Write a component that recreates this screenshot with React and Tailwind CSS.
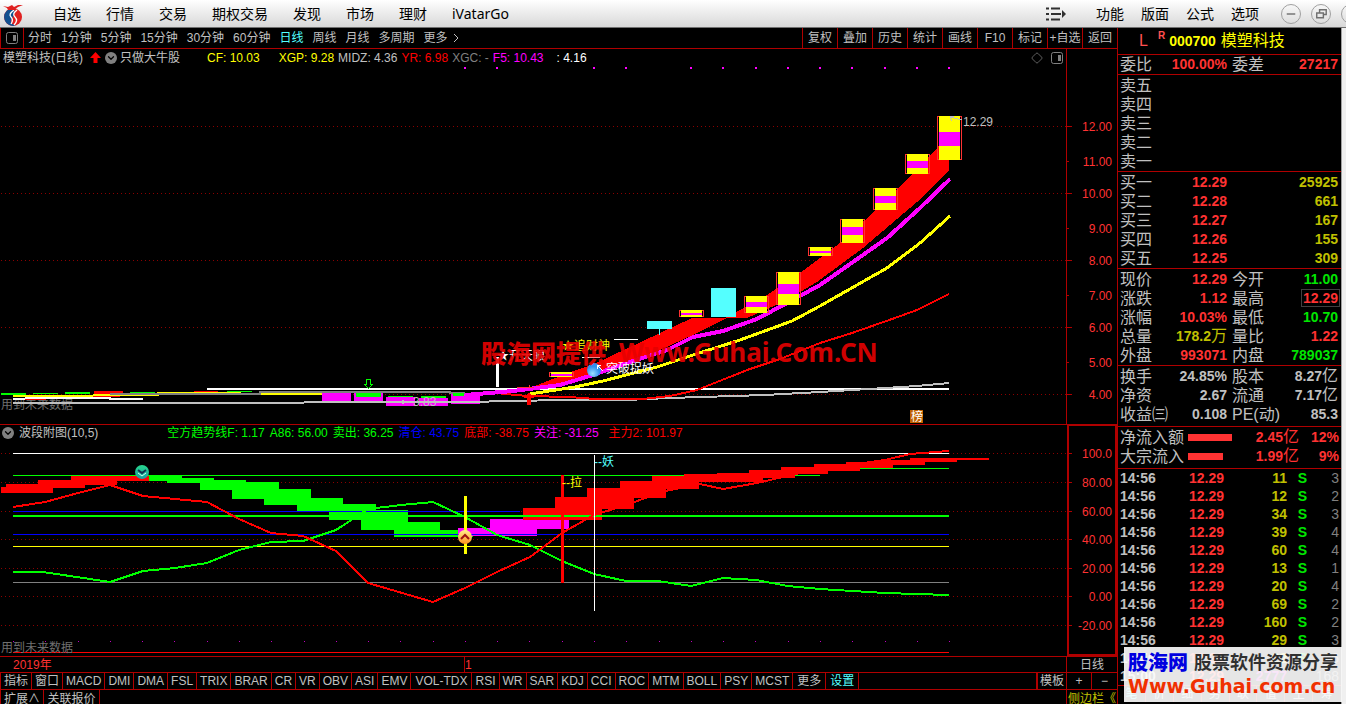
import { ChevronDown, Diamond } from 'lucide-react';

const MENU = ['自选', '行情', '交易', '期权交易', '发现', '市场', '理财', 'iVatarGo'];
const MENU_RIGHT = ['功能', '版面', '公式', '选项'];
const PERIODS = ['分时', '1分钟', '5分钟', '15分钟', '30分钟', '60分钟', '日线', '周线', '月线', '多周期', '更多'];
const TOOLS = ['复权', '叠加', '历史', '统计', '画线', 'F10', '标记', '+自选', '返回'];
const INDICATORS = ['指标', '窗口', 'MACD', 'DMI', 'DMA', 'FSL', 'TRIX', 'BRAR', 'CR', 'VR', 'OBV', 'ASI', 'EMV', 'VOL-TDX', 'RSI', 'WR', 'SAR', 'KDJ', 'CCI', 'ROC', 'MTM', 'BOLL', 'PSY', 'MCST', '更多', '设置'];

const SELLS = ['卖五', '卖四', '卖三', '卖二', '卖一'];
const BUYS = [
  ['买一', '12.29', '25925'],
  ['买二', '12.28', '661'],
  ['买三', '12.27', '167'],
  ['买四', '12.26', '155'],
  ['买五', '12.25', '309'],
];

const RED = 'text-[#ff3232]';
const GREEN = 'text-[#00e600]';
const GOLD = 'text-[#c0c000]';
const GREY = 'text-[#c0c0c0]';

// [label, value, colour, label, value, colour]
const QUOTE = [
  ['现价', '12.29', RED, '今开', '11.00', GREEN],
  ['涨跌', '1.12', RED, '最高', '12.29', RED],
  ['涨幅', '10.03%', RED, '最低', '10.70', GREEN],
  ['总量', '178.2万', GOLD, '量比', '1.22', RED],
  ['外盘', '993071', RED, '内盘', '789037', GREEN],
];
const BASICS = [
  ['换手', '24.85%', GREY, '股本', '8.27亿', GREY],
  ['净资', '2.67', GREY, '流通', '7.17亿', GREY],
  ['收益㈢', '0.108', GREY, 'PE(动)', '85.3', GREY],
];

const TICKS = [
  ['14:56', '11', '3'],
  ['14:56', '12', '2'],
  ['14:56', '34', '3'],
  ['14:56', '39', '4'],
  ['14:56', '60', '4'],
  ['14:56', '13', '1'],
  ['14:56', '20', '4'],
  ['14:56', '69', '2'],
  ['14:56', '160', '2'],
  ['14:56', '29', '3'],
  ['14:56', '22', '6'],
  ['15:00', '2777', '168'],
];

// limit-up candles: x, top, bottom, band top, band bottom
const CANDLES = [
  [551, 372, 377, 374, 376],
  [681, 310, 317, 313, 315],
  [746, 296, 313, 302, 307],
  [778, 272, 305, 284, 294],
  [810, 247, 256, 251, 253],
  [842, 219, 243, 227, 235],
  [875, 188, 210, 196, 203],
  [907, 154, 174, 161, 168],
  [939, 116, 160, 132, 146],
];
const SIGNAL_DOTS = [465, 497, 594, 626, 691, 723, 756, 788, 820, 852, 885, 917, 949];

const PRICE_AXIS = [['12.00', 126], ['11.00', 161], ['10.00', 193], ['9.00', 228], ['8.00', 260], ['7.00', 295], ['6.00', 327], ['5.00', 362], ['4.00', 394]];
const WAVE_AXIS = [['100.0', 453], ['80.00', 482], ['60.00', 511], ['40.00', 539], ['20.00', 568], ['0.00', 596], ['-20.00', 625]];

function Axis({ labels, every }) {
  return (
    <g>
      {labels.map(([label, y], i) => (
        <g key={label}>
          {i % every === 0 && <path d={`M1 ${y + 0.5}H1066`} stroke="#8c0000" strokeDasharray="1 3" />}
          <path d={`M1067 ${y + 0.5}h${i % every === 0 ? 5 : 2}`} stroke="#b00000" />
          <text x="1112" y={y + 5} textAnchor="end" fill="#ff3232" fontSize="12">{label}</text>
        </g>
      ))}
    </g>
  );
}

function PriceChart() {
  return (
    <svg viewBox="0 66 1117 358" className="block h-auto w-full" shapeRendering="crispEdges">
      <defs>
        <radialGradient id="blueBall" cx="40%" cy="75%">
          <stop offset="0" stopColor="#9be0ff" />
          <stop offset="1" stopColor="#3090f0" />
        </radialGradient>
      </defs>
      <Axis labels={PRICE_AXIS} every={2} />
      <path d="M1066.5 66V424" stroke="#b00000" />
      {SIGNAL_DOTS.map((x) => <rect key={x} x={x - 1} y="67" width="2" height="2" fill="#ff00ff" />)}

      <text x="1" y="409" fontSize="12" fill="#707070">用到未来数据</text>

      {/* flat stretch before the breakout */}
      <g fill="#00ff00">
        <rect x="1" y="393" width="25" height="2" />
        <rect x="33" y="393" width="25" height="1" />
        <rect x="65" y="392" width="25" height="2" />
        <rect x="130" y="392" width="25" height="1" />
        <rect x="227" y="391" width="25" height="1" />
        <rect x="323" y="391" width="25" height="2" />
      </g>
      <g fill="#ff0000">
        <rect x="60" y="395" width="60" height="2" />
        <rect x="94" y="391" width="29" height="4" />
        <rect x="194" y="391" width="24" height="1" />
        <rect x="291" y="391" width="26" height="1" />
        <rect x="13" y="399" width="33" height="1" />
      </g>
      <path d="M13 396H77L110 395H158V393H240V394H337V393" fill="none" stroke="#ffff00" strokeWidth="2" />
      <path d="M110 394H260V392H450V393H465" fill="none" stroke="#808080" strokeWidth="2" />
      <path d="M13 399L37 398H110V399H143" fill="none" stroke="#fff" strokeWidth="2" />
      <g fill="#ff00ff">
        <rect x="322" y="393" width="29" height="8" />
        <rect x="354" y="393" width="29" height="8" />
        <rect x="386" y="397" width="29" height="9" />
        <rect x="419" y="398" width="29" height="8" />
        <rect x="451" y="394" width="29" height="10" />
      </g>
      <g fill="#00ff00">
        <rect x="356" y="393" width="25" height="4" />
        <rect x="388" y="396" width="25" height="1" />
        <rect x="421" y="396" width="25" height="2" />
        <rect x="453" y="393" width="11" height="3" />
      </g>
      <path d="M207 389H949" stroke="#fff" strokeWidth="2" />
      <path d="M13 403H303L305 402H465L562 400H627L668 398L702 397L765 395L820 392L885 388L917 386L949 383" fill="none" stroke="#c0c0c0" strokeWidth="2" />
      <path d="M401 402H411M401 402l3 -2M401 402l3 2" stroke="#c0c0c0" fill="none" />
      <text x="413" y="406" fontSize="12" fill="#c0c0c0">3.83</text>
      <path d="M366.500 379.500h4v5h2l-4 4l-4 -4h2z" fill="none" stroke="#00ff00" />

      {/* moving averages and the ribbon */}
      <path d="M530 388L573 371L594 364L643 341L692 318H725L740 310L767 295L800 273L840 243L865 220L897 190L928 158L937 148L949 135V171L917 202L863 248L817 282L787 300L747 318H727L693 335L660 350L594 377L560 385L530 389Z" fill="#ff0000" />
      <path d="M485 392L527 396L570 397L595 399H642L670 396L697 390L727 378L750 369L780 359L820 343L852 333L892 319L917 310L949 294" fill="none" stroke="#ff0000" strokeWidth="2" />
      <path d="M530 394L575 387L603 381L657 367L693 355L740 340L792 321L820 306L887 268L920 243L950 216" fill="none" stroke="#ffff00" strokeWidth="3" />
      <path d="M465 395L513 391L560 385L593 375L627 363L667 350L693 337L723 331L757 319L787 303L820 285L853 262L887 238L920 208L950 179" fill="none" stroke="#ff00ff" strokeWidth="4" />

      {/* candles */}
      <path d="M659 329V335" stroke="#54ffff" />
      <rect x="647" y="321" width="25" height="8" fill="#54ffff" />
      <rect x="711" y="288" width="25" height="29" fill="#54ffff" />
      {CANDLES.map(([x, top, bottom, bandTop, bandBottom]) => (
        <g key={x}>
          <rect x={x - 1.5} y={top + 0.5} width="24" height={bottom - top - 1} fill="none" stroke="#ff3232" />
          <rect x={x} y={top} width="21" height={bottom - top} fill="#ffff00" />
          <rect x={x} y={bandTop} width="21" height={bandBottom - bandTop} fill="#ff00ff" />
        </g>
      ))}
      <path d="M517 387H534M529 385V387" stroke="#ff3232" />
      <path d="M529 392l5 6h-3v7h-4v-7h-3z" fill="#ff0000" />
      <rect x="496" y="357" width="3" height="30" fill="#fff" />
      <path d="M614 339.500H638M582 357.500H600" stroke="#fff" />
      <path d="M950 117l12 3M950 117l4 -1M950 117l2 4" stroke="#c0c0c0" fill="none" />
      <text x="963" y="126" fontSize="12" fill="#c0c0c0">12.29</text>

      {/* signal marks */}
      <text x="497" y="360" fontSize="12" fill="#fff">★开天眼</text>
      <text x="562" y="350" fontSize="12" fill="#ffff00">★追财神</text>
      <circle cx="594" cy="370" r="7" fill="url(#blueBall)" shapeRendering="auto" />
      <path d="M597 365l6 6M597 365h4M597 365v4" stroke="#fff" fill="none" />
      <text x="606" y="373" fontSize="12" fill="#fff">突破捉妖</text>
      <rect x="910" y="410" width="13" height="13" fill="#c06000" />
      <text x="911" y="421" fontSize="12" fill="#fff">榜</text>

      <g fill="#e60000" fillOpacity="0.92" fontWeight="900">
        <text x="481" y="363" fontSize="25">股海网提供</text>
        <text x="619" y="362" fontSize="26" fontWeight="700" style={{ fontFamily: '"Noto Sans", sans-serif' }}>Www.Guhai.Com.CN</text>
      </g>
    </svg>
  );
}

function WaveChart() {
  return (
    <svg viewBox="0 441 1117 215" className="block h-auto w-full" shapeRendering="crispEdges">
      <defs>
        <linearGradient id="tealBall" x2="0" y2="1">
          <stop offset="0" stopColor="#28d88c" />
          <stop offset="1" stopColor="#189ca0" />
        </linearGradient>
        <linearGradient id="orangeBall" x2="0" y2="1">
          <stop offset="0" stopColor="#fff08c" />
          <stop offset="1" stopColor="#ff9020" />
        </linearGradient>
      </defs>
      <Axis labels={WAVE_AXIS} every={1} />
      <path d="M1068 441V655H1116V441" fill="none" stroke="#b00000" strokeWidth="2" />
      <path d="M13 453.500H949" stroke="#fff" />
      <path d="M13 475.500H820" stroke="#00ff00" />
      <path d="M820 468.500H949" stroke="#00ff00" />

      <path d="M1 487H6V484H38V480H71V476H149V481H117V485H85V488H53V493H1Z" fill="#ff0000" />
      <path d="M149 475H182V478H214V480H246V482H279V489H311V498H343V504H376V510H408V522H440V530H473V537H394V530H361V520H329V511H297V505H264V499H232V490H200V483H167V481H149Z" fill="#00ff00" />
      <path d="M458 528H490V519H569V529H537V536H458Z" fill="#ff00ff" />
      <path d="M523 508H555V497H587V488H620V481H652V476H684V474H717V473H749V470H781V467H814V464H846V462H878V460H910V458H989V460H957V462H925V465H893V468H860V471H828V474H795V478H763V482H731V482H699V489H666V498H634V509H602V520H523Z" fill="#ff0000" />

      <path d="M13 534.500H949M13 511.500H520" stroke="#0000ff" />
      <path d="M13 516H949" stroke="#00ff00" strokeWidth="2" />
      <path d="M13 546.500H949" stroke="#ffff00" />
      <path d="M13 582.500H949" stroke="#808080" />
      <path d="M13 652.500H949" stroke="#ff0000" />
      <path d="M13 641.500H950" stroke="#c000c0" strokeDasharray="1 31.280" />

      <path d="M13 572H43L110 582L143 571L175 568L207 563L239 550L271 542L303 541L336 530L368 509L401 505L433 502L465 517L497 535L530 545L562 561L594 574L626 581H658L691 586L723 578L756 580L788 586L820 589L885 593L949 595" fill="none" stroke="#00ff00" strokeWidth="2" />
      <path d="M13 507L45 502L78 493L110 485L143 496L175 499L207 502L239 519L271 533L303 536L336 551L368 583L433 602L465 588L497 572L530 557L562 533L594 515L626 505L665 491L700 484L723 489L757 483L800 473L850 465L885 460L910 454L949 451" fill="none" stroke="#ff0000" strokeWidth="2" />

      <rect x="464" y="496" width="3" height="58" fill="#ffff00" />
      <rect x="561" y="475" width="3" height="108" fill="#ff0000" />
      <path d="M594.500 455V611" stroke="#fff" />
      <text x="594" y="466" fontSize="12" fill="#54ffff">--妖</text>
      <text x="562" y="487" fontSize="12" fill="#ffff00">--拉</text>

      <g shapeRendering="auto" fill="none" strokeWidth="2">
        <circle cx="142" cy="472" r="7" fill="url(#tealBall)" />
        <path d="M138 470l4 3l4 -3" stroke="#103050" />
        <path d="M138 473l4 3l4 -3" stroke="#d0fff0" strokeWidth="1" />
        <circle cx="465" cy="537" r="7" fill="url(#orangeBall)" />
        <path d="M461 539l4 -4l4 4" stroke="#a01010" />
      </g>
      <text x="1" y="652" fontSize="12" fill="#707070">用到未来数据</text>
    </svg>
  );
}

function PanelIcon({ className }) {
  return (
    <svg viewBox="0 0 12 12" className={className}>
      <rect x="0.5" y="0.5" width="11" height="11" rx="2" fill="none" stroke="currentColor" />
      <rect x="7" y="3" width="3" height="6" fill="currentColor" />
    </svg>
  );
}

function FoldButton({ label }) {
  return (
    <button type="button" aria-label={label} className="grid size-3 shrink-0 place-items-center rounded-full bg-[#808080] text-black">
      <ChevronDown className="size-[10px]" strokeWidth={3} />
    </button>
  );
}

// digits are bold, the unit character after them is not
function Value({ text }) {
  const unit = text.match(/[万亿]$/);
  if (!unit) return text;
  return <>{text.slice(0, -1)}<span className="text-base leading-none font-normal">{unit[0]}</span></>;
}

function QuoteTable({ rows }) {
  return (
    <table className="w-full table-fixed border-collapse">
      <colgroup><col className="w-[36px]" /><col className="w-[73px]" /><col className="w-[40px]" /><col /></colgroup>
      <tbody>
        {rows.map(([l1, v1, c1, l2, v2, c2]) => (
          <tr key={l1} className="h-[19px] leading-[19px] whitespace-nowrap">
            <th className="p-0 pl-[2px] text-left text-base leading-[19px] font-normal">{l1}</th>
            <td className={`p-0 text-right font-bold ${c1}`}><Value text={v1} /></td>
            <th className="p-0 pl-[5px] text-left text-base leading-[19px] font-normal">{l2}</th>
            <td className={`p-0 pr-[3px] text-right font-bold ${c2}`}>
              {l2 === '最高' ? <span className="-mr-[2px] inline-block border border-[#404040] px-px leading-[16px]">{v2}</span> : <Value text={v2} />}
            </td>
          </tr>
        ))}
      </tbody>
    </table>
  );
}

function QuotePanel() {
  return (
    <aside className="relative flex w-[229px] shrink-0 border-l border-[#b00000] text-sm text-[#c0c0c0]">
      <div className="min-w-0 flex-1 divide-y divide-[#b00000] overflow-hidden">
        <h1 className="flex h-[27px] items-center pl-[21px] font-bold text-[#ffff00]">
          <span className="text-base font-normal text-[#ff5050]">L</span>
          <sup className="ml-[10px] text-[10px] text-[#ff5050]">R</sup>
          <span className="ml-1">000700</span>
          <span className="ml-[5px] text-base font-normal">模塑科技</span>
        </h1>
        <QuoteTable rows={[['委比', '100.00%', RED, '委差', '27217', RED]]} />
        <div className="pt-px">
          <table className="w-full border-collapse">
            <tbody>
              {SELLS.map((s) => <tr key={s} className="h-[19px]"><th className="p-0 pl-[2px] text-left text-base leading-[19px] font-normal">{s}</th></tr>)}
            </tbody>
          </table>
        </div>
        <div className="pt-px">
          <table className="w-full table-fixed border-collapse">
            <colgroup><col className="w-[36px]" /><col className="w-[73px]" /><col /></colgroup>
            <tbody>
              {BUYS.map(([label, price, vol]) => (
                <tr key={label} className="h-[19px] text-right leading-[19px] font-bold">
                  <th className="p-0 pl-[2px] text-left text-base leading-[19px] font-normal">{label}</th>
                  <td className="p-0 text-[#ff3232]">{price}</td>
                  <td className="p-0 pr-[3px] text-[#c0c000]">{vol}</td>
                </tr>
              ))}
            </tbody>
          </table>
        </div>
        <div className="pt-px"><QuoteTable rows={QUOTE} /></div>
        <div className="pt-px pb-[2px]"><QuoteTable rows={BASICS} /></div>
        <div className="pt-px pb-[2px]">
          <table className="w-full table-fixed border-collapse">
            <colgroup><col className="w-[70px]" /><col className="w-[46px]" /><col className="w-[65px]" /><col /></colgroup>
            <tbody>
              {[['净流入额', 'w-[44px]', '2.45亿', '12%'], ['大宗流入', 'w-[35px]', '1.99亿', '9%']].map(([label, bar, sum, pct]) => (
                <tr key={label} className="h-[19px] text-right leading-[19px] font-bold whitespace-nowrap text-[#ff3232]">
                  <th className="p-0 pl-[2px] text-left text-base leading-[19px] font-normal text-[#c0c0c0]">{label}</th>
                  <td className="p-0"><div className={`h-[7px] bg-[#ff3232] ${bar}`} /></td>
                  <td className="p-0"><Value text={sum} /></td>
                  <td className="p-0 pr-[2px]">{pct}</td>
                </tr>
              ))}
            </tbody>
          </table>
        </div>
        <table className="w-full table-fixed border-collapse">
          <colgroup><col className="w-[46px]" /><col className="w-[60px]" /><col className="w-[63px]" /><col className="w-[20px]" /><col /></colgroup>
          <tbody>
            {TICKS.map(([time, vol, count], i) => (
              <tr key={i} className="h-[18px] text-right leading-[18px] font-bold">
                <td className="p-0 pl-[2px] text-left">{time}</td>
                <td className="p-0 text-[#ff3232]">12.29</td>
                <td className={`p-0 ${vol === '2777' ? 'text-[#c000c0]' : 'text-[#c0c000]'}`}>{vol}</td>
                <td className="p-0 text-[#00e600]">{time === '15:00' ? '' : 'S'}</td>
                <td className="p-0 pr-[2px] font-normal text-[#808080]">{count}</td>
              </tr>
            ))}
          </tbody>
        </table>
        <nav className="grid grid-cols-8 divide-x divide-[#b00000] text-center text-xs">
          {['笔', '价', '细', '势', '联', '值', '主', '筹'].map((t) => <button key={t} type="button" className={t === '笔' ? 'text-[#54ffff]' : ''}>{t}</button>)}
        </nav>
      </div>
      <div className="w-[5px] shrink-0 border-l border-[#a0a0a0] bg-[#f0f0f0]" />

      <div className="absolute right-1 bottom-[2px] left-[6px] bg-white/90 px-1 pt-1 pb-1">
        <div className="flex items-center justify-between leading-6 whitespace-nowrap">
          <span className="text-xl leading-6 font-black text-[#0000e0]">股海网</span>
          <span className="text-lg leading-6 font-bold text-[#303030]">股票软件资源分享</span>
        </div>
        <a href="#guhai" className="block font-['DejaVu_Sans',sans-serif] text-[19px] leading-[23px] font-bold whitespace-nowrap text-[#f03000]">Www.Guhai.com.cn</a>
      </div>
    </aside>
  );
}

export default function App() {
  return (
    <div className="flex h-screen flex-col overflow-hidden bg-black font-['Liberation_Sans','Noto_Sans_CJK_SC',sans-serif] text-xs text-[#c0c0c0]">
      <header className="flex h-7 shrink-0 items-center justify-between overflow-hidden border-b border-[#707070] bg-linear-to-b from-white to-[#d8d8d8] font-['Noto_Sans','Noto_Sans_CJK_SC',sans-serif] text-sm text-black">
        <div className="flex items-center">
          <svg viewBox="0 0 24 24" className="size-6">
            <circle cx="13" cy="15" r="9" fill="#e02020" />
            <path d="M14 6a9 9 0 1 0 2 17.500c-5 -1 -6 -4 -4 -7s3 -6 2 -10.500z" fill="#125090" />
            <path d="M14 8c-4 3 -5 5 -3 7s2 4 0 7M17 8c-4 3 -4 5 -2 7s2 5 -1 8" fill="none" stroke="#fff" strokeWidth="1.300" />
            <path d="M3 4l5 1l4 -2l2 2l4 -2l5 0l-5 2l-4 3h-6l-1 -2z" fill="#e02020" />
          </svg>
          <nav className="ml-[29px] flex gap-[25px]">
            {MENU.map((m) => <button key={m} type="button" className="leading-6">{m}</button>)}
          </nav>
        </div>
        <div className="-mr-[15px] flex items-center">
          <svg viewBox="0 0 20 14" className="mr-[30px] h-[14px] w-5 text-[#303030]">
            <path d="M0 1.500h3M5 1.500h9M0 7h3M5 7h10M0 12.500h3M5 12.500h9" stroke="currentColor" strokeWidth="2" />
            <path d="M16 3l4 4l-4 4z" fill="currentColor" />
          </svg>
          <nav className="flex gap-[17px]">
            {MENU_RIGHT.map((m) => <button key={m} type="button" className="leading-6">{m}</button>)}
          </nav>
          <div className="ml-[22px] flex gap-[10px] text-[#707070]">
            {[['最小化', 'M5 9.500h9'], ['还原', 'M8 8V5h7v5h-3M5 8.500h7v5h-7z'], ['关闭', 'M6 6l7 7M13 6l-7 7']].map(([label, d]) => (
              <button key={label} type="button" aria-label={label} className="size-5 rounded-full border border-[#a0a0a0]">
                <svg viewBox="0 0 19 19" fill="none" stroke="currentColor" strokeWidth="1.500"><path d={d} /></svg>
              </button>
            ))}
          </div>
        </div>
      </header>

      <div className="flex min-h-0 flex-1">
        <main className="min-w-0 flex-1">
          <div className="flex h-[21px] items-stretch border-b border-[#b00000]">
            <button type="button" aria-label="侧栏" className="grid w-6 place-items-center border-x border-[#b00000] text-[#808080]"><PanelIcon className="size-3" /></button>
            <nav className="ml-1 flex flex-1 items-center gap-[9px]">
              {PERIODS.map((p) => <button key={p} type="button" className={p === '日线' ? 'text-[#54ffff]' : ''}>{p}</button>)}
              <svg viewBox="0 0 6 10" className="-ml-1 h-[10px] w-[6px]"><path d="M1 1l4 4l-4 4" fill="none" stroke="currentColor" /></svg>
            </nav>
            {TOOLS.map((t) => <button key={t} type="button" className="w-[35px] border-l border-[#b00000] whitespace-nowrap">{t}</button>)}
          </div>

          <section>
            <div className="flex h-[17px] items-stretch">
              <div className="flex flex-1 items-center border-r border-[#b00000] pl-[3px] whitespace-nowrap">
                <span>模塑科技(日线)</span>
                <svg viewBox="0 0 11 11" className="mr-1 ml-[7px] size-[11px] text-[#ff0000]"><path d="M5.500 0L11 6H7.500V11H3.500V6H0z" fill="currentColor" /></svg>
                <FoldButton label="收起主图" />
                <span className="ml-[3px]">只做大牛股</span>
                <div className="ml-[27px] flex gap-1">
                  <span className="text-[#ffff00]">CF: 10.03</span>
                  <span className="ml-[15px] text-[#ffff00]">XGP: 9.28</span>
                  <span>MIDZ: 4.36</span>
                  <span className="text-[#ff0000]">YR: 6.98</span>
                  <span className="text-[#808080]">XGC: -</span>
                  <span className="text-[#ff00ff]">F5: 10.43</span>
                  <span className="ml-[9px] text-white">: 4.16</span>
                </div>
                <span className="mr-[3px] ml-auto flex items-center gap-2 text-[#808080]"><Diamond className="size-3" strokeWidth={1.5} /><PanelIcon className="size-3" /></span>
              </div>
              <div className="w-[50px]" />
            </div>
            <PriceChart />
          </section>

          <section className="border-t border-[#b00000]">
            <div className="flex h-4 items-stretch">
              <div className="flex flex-1 items-center gap-[5px] pl-[2px] whitespace-nowrap">
                <FoldButton label="收起附图" />
                <span>波段附图(10,5)</span>
                <span className="ml-16 text-[#00ff00]">空方趋势线F: 1.17</span>
                <span className="text-[#00ff00]">A86: 56.00</span>
                <span className="text-[#00ff00]">卖出: 36.25</span>
                <span className="text-[#0000ff]">清仓: 43.75</span>
                <span className="text-[#ff0000]">底部: -38.75</span>
                <span className="text-[#ff00ff]">关注: -31.25</span>
                <span className="ml-[5px] text-[#ff0000]">主力2: 101.97</span>
              </div>
              <div className="w-[50px] border-x-2 border-t border-[#b00000]" />
            </div>
            <WaveChart />
          </section>

          <div className="flex h-4 items-center border-t border-[#b00000] text-[#ff3232]">
            <div className="flex h-full flex-1 items-center border-r border-[#b00000]">
              <span className="w-[464px] pl-[13px]">2019年</span>
              <span className="flex h-full items-center border-l border-[#b00000]">1</span>
            </div>
            <span className="w-[50px] text-center text-[#c0c0c0]">日线</span>
          </div>

          <div className="flex h-[17px] items-stretch border-t border-[#b00000] whitespace-nowrap">
            <nav className="flex flex-1 items-stretch border-l border-[#b00000]">
              {INDICATORS.map((t, i) => (
                <button key={i} type="button" className={`border-r border-[#b00000] leading-4 ${t.length > 4 || i > 23 ? 'px-1' : 'px-[3px]'} ${t === '设置' ? 'text-[#54ffff]' : ''}`}>{t}</button>
              ))}
            </nav>
            <button type="button" className="w-[31px] border-r border-l-2 border-[#b00000]">模板</button>
            <button type="button" className="w-[25px] border-r border-[#b00000]">+</button>
            <button type="button" className="w-[25px]">−</button>
          </div>

          <div className="flex h-5 items-start border-y border-[#b00000] leading-[18px]">
            <button type="button" className="w-11 border-x border-[#b00000]">扩展∧</button>
            <button type="button" className="w-14 border-r border-[#b00000]">关联报价</button>
            <button type="button" className="ml-auto w-[51px] border-l border-[#b00000] whitespace-nowrap text-[#c0c000]">侧边栏《</button>
          </div>
        </main>
        <QuotePanel />
      </div>
    </div>
  );
}
